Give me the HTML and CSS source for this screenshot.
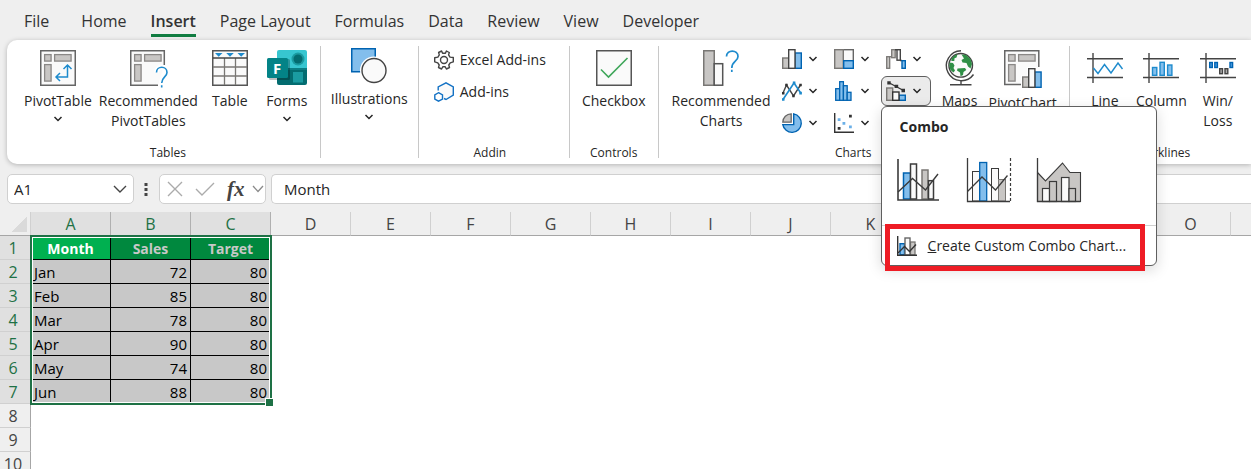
FILE: index.html
```html
<!DOCTYPE html>
<html lang="en">
  <head>
    <meta charset="UTF-8" />
    <title>Insert - Combo Chart</title>
    <meta name="viewport" content="width=device-width, initial-scale=1" />
    <link rel="stylesheet" href="styles.css">
  </head>
  <body>
    <svg class="defs" aria-hidden="true">
      <symbol id="chevron" viewBox="0 0 10 6">
        <path d="M1.5 1 L5 4.5 L8.5 1" fill="none" stroke="#262626" stroke-width="1.5" />
      </symbol>
      <symbol id="pivot-parts" viewBox="0 0 36 36">
        <g fill="#c8c6c4" stroke="#8a8886" stroke-width="1.3">
          <rect x="4.6" y="4.6" width="6.5" height="6.5" />
          <rect x="14.6" y="4.6" width="16.5" height="6.5" />
          <rect x="4.6" y="14.6" width="6.5" height="16.5" />
        </g>
      </symbol>
    </svg>

    <nav class="tabs">
      <a class="tab file" href="#">File</a>
      <a class="tab" href="#">Home</a>
      <a class="tab active" href="#">Insert</a>
      <a class="tab" href="#">Page Layout</a>
      <a class="tab" href="#">Formulas</a>
      <a class="tab" href="#">Data</a>
      <a class="tab" href="#">Review</a>
      <a class="tab" href="#">View</a>
      <a class="tab" href="#">Developer</a>
    </nav>

    <div class="ribbon">
      <section class="group tables">
        <div class="group-body">
          <button class="big">
            <svg width="36" height="36" viewBox="0 0 36 36">
              <rect x=".75" y=".75" width="34.5" height="34.5" fill="#fafafa" stroke="#666" stroke-width="1.5" />
              <use href="#pivot-parts" width="36" height="36" />
              <path d="M17 27 H27.5 V15.5 M23.5 19 L27.5 15 L31.5 19 M20 23 L16 27 L20 31" fill="none" stroke="#1e8bcd" stroke-width="1.5" />
            </svg>
            <span>PivotTable</span>
            <svg class="chevron"><use href="#chevron" /></svg>
          </button>
          <button class="big">
            <svg width="36" height="36" viewBox="0 0 36 36">
              <path d="M34.3 15 V.75 H.75 V35.3 H28" fill="#fafafa" stroke="#666" stroke-width="1.5" />
              <use href="#pivot-parts" width="36" height="36" />
              <path d="M26.5 22.5 C26.5 15.5 37 15.5 37 22.5 C37 27 31.7 27 31.7 33 M31.7 35.2 V37.6" fill="none" stroke="#fff" stroke-width="5" />
              <path d="M26.5 22.5 C26.5 15.5 37 15.5 37 22.5 C37 27 31.7 27 31.7 33 M31.7 35.2 V37.6" fill="none" stroke="#1e8bcd" stroke-width="1.6" />
            </svg>
            <span>Recommended<br>PivotTables</span>
          </button>
          <button class="big">
            <svg width="36" height="36" viewBox="0 0 36 36">
              <rect x=".75" y=".75" width="34.5" height="34.5" fill="#fafafa" stroke="#555" stroke-width="1.5" />
              <path d="M1 17 H35 M1 26 H35 M12.5 8 V35 M23.5 8 V35" stroke="#797774" stroke-width="1.3" />
              <path d="M1 8 H35" stroke="#444" stroke-width="1.3" />
              <path d="M3 3 H10.5 L6.7 6.8 Z M14.2 3 H21.8 L18 6.8 Z M25.5 3 H33 L29.2 6.8 Z" fill="#1e8bcd" />
            </svg>
            <span>Table</span>
          </button>
          <button class="big">
            <svg width="40" height="36" viewBox="0 0 40 36">
              <path d="M12 0 H38 Q40 0 40 2 V18 H10 V2 Q10 0 12 0 Z" fill="#37c6d0" />
              <path d="M10 18 H40 V33 Q40 35 38 35 H12 Q10 35 10 33 Z" fill="#036c70" />
              <path d="M20 18 H40 V20 H20 Z" fill="#0b7f84" />
              <circle cx="31" cy="9" r="6.5" fill="#1a9ba1" />
              <circle cx="31" cy="9" r="4.5" fill="#036c70" />
              <rect x="26" y="22" width="10" height="10.5" fill="#1a9ba1" />
              <rect x="2" y="9" width="21" height="21" rx="1.5" fill="#000" opacity=".25" />
              <rect x="0" y="8" width="21" height="20" rx="1.5" fill="#038387" />
              <text class="forms-letter" x="10" y="23.5" text-anchor="middle">F</text>
            </svg>
            <span>Forms</span>
            <svg class="chevron"><use href="#chevron" /></svg>
          </button>
        </div>
        <div class="group-label">Tables</div>
      </section>

      <section class="group illustrations">
        <div class="group-body">
          <button class="big">
            <svg width="36" height="36" viewBox="0 0 36 36">
              <rect x=".75" y=".75" width="23.5" height="23" fill="#83beec" stroke="#0063b1" stroke-width="1.5" />
              <circle cx="23" cy="22.5" r="14" fill="#fff" />
              <circle cx="23" cy="22.5" r="12" fill="#fafafa" stroke="#444" stroke-width="1.4" />
            </svg>
            <span>Illustrations</span>
            <svg class="chevron"><use href="#chevron" /></svg>
          </button>
        </div>
      </section>

      <section class="group addin">
        <div class="group-body">
          <button class="row-button">
            <svg width="20" height="20" viewBox="0 0 20 20" fill="none" stroke="#444" stroke-width="1.4">
              <path d="M7.6 1 L8.6 3.3 H11.4 L12.4 1 L15.3 2.5 L14.6 4.9 L16 7.1 L19.3 7.5 V11.8 L16.2 12.8 L14.8 15 L15.5 17.5 L12.4 19 L11.2 16.7 H8.8 L7.6 19 L4.5 17.5 L5.2 15 L3.8 12.8 L.7 11.8 V7.7 L3.9 7.1 L5.3 4.9 L4.6 2.5 Z" stroke-linejoin="round" />
              <circle cx="10" cy="10" r="3.5" />
            </svg>
            Excel Add-ins
          </button>
          <button class="row-button">
            <svg width="20" height="20" viewBox="0 0 20 20" fill="none" stroke="#1271c4" stroke-width="1.4">
              <path d="M4.2 8.5 V5 L12 .9 L19.3 4.8 V13 L12 17.5 L10 16.5" fill="#fafafa" />
              <path d="M4.5 10.7 L8.5 12.8 V17 L4.5 19.2 L.8 17 V12.8 Z" fill="#fff" />
            </svg>
            Add-ins
          </button>
        </div>
        <div class="group-label">Addin</div>
      </section>

      <section class="group controls">
        <div class="group-body">
          <button class="big">
            <svg width="36" height="36" viewBox="0 0 36 36">
              <rect x=".75" y=".75" width="34.5" height="34.5" fill="#fafafa" stroke="#555" stroke-width="1.5" />
              <path d="M5 19.5 L12.5 27 L31.5 8" fill="none" stroke="#3fa65a" stroke-width="1.6" />
            </svg>
            <span>Checkbox</span>
          </button>
        </div>
        <div class="group-label">Controls</div>
      </section>

      <section class="group charts">
        <div class="group-body">
          <button class="big">
            <svg width="36" height="36" viewBox="0 0 36 36">
              <rect x=".75" y=".75" width="10.5" height="34.5" fill="#c8c6c4" stroke="#797774" stroke-width="1.5" />
              <rect x="11.2" y="13.7" width="8.5" height="21.5" fill="#fafafa" stroke="#555" stroke-width="1.5" />
              <path d="M23.5 6.5 C23.5 -.8 35 -.8 35 6.5 C35 11.5 28.8 11 28.8 18 M28.8 19.7 V22" fill="none" stroke="#1e8bcd" stroke-width="1.7" />
            </svg>
            <span>Recommended<br>Charts</span>
          </button>

          <div class="chart-types">
            <button class="small" aria-label="Column or Bar Chart">
              <svg width="20" height="20" viewBox="0 0 20 20">
                <rect x=".7" y="9" width="6" height="10.3" fill="#c8c6c4" stroke="#797774" stroke-width="1.4" />
                <rect x="13" y="4" width="6.3" height="15.3" fill="#83beec" stroke="#0063b1" stroke-width="1.4" />
                <rect x="6.7" y=".7" width="6.3" height="18.6" fill="#fafafa" stroke="#444" stroke-width="1.4" />
              </svg>
              <svg class="chevron"><use href="#chevron" /></svg>
            </button>
            <button class="small" aria-label="Hierarchy Chart">
              <svg width="20" height="20" viewBox="0 0 20 20">
                <rect x="9.3" y=".7" width="10" height="11" fill="#fafafa" stroke="#666" stroke-width="1.4" />
                <rect x=".7" y=".7" width="8.6" height="18.6" fill="#c8c6c4" stroke="#797774" stroke-width="1.4" />
                <rect x="9.7" y="11.7" width="9.6" height="7.6" fill="#83beec" stroke="#0063b1" stroke-width="1.4" />
              </svg>
              <svg class="chevron"><use href="#chevron" /></svg>
            </button>
            <button class="small" aria-label="Waterfall Chart">
              <svg width="20" height="20" viewBox="0 0 20 20">
                <rect x=".7" y="7.7" width="3" height="11.6" fill="#c8c6c4" stroke="#797774" stroke-width="1.3" />
                <rect x="5.7" y=".7" width="3.5" height="8" fill="#c8c6c4" stroke="#797774" stroke-width="1.3" />
                <path d="M3.7 7.7 H5.7" stroke="#797774" stroke-width="1.3" />
                <rect x="11" y=".7" width="3.3" height="10.5" fill="#fafafa" stroke="#444" stroke-width="1.4" />
                <path d="M9 .7 H11 M14 11.5 H16" stroke="#444" stroke-width="1.4" />
                <rect x="16" y="11.7" width="3.3" height="7.6" fill="#83beec" stroke="#0063b1" stroke-width="1.4" />
              </svg>
              <svg class="chevron"><use href="#chevron" /></svg>
            </button>
            <button class="small" aria-label="Line or Area Chart">
              <svg width="20" height="20" viewBox="0 0 20 20">
                <path d="M1 12 L4.5 4 L11.5 15 L18.5 4" fill="none" stroke="#444" stroke-width="1.4" />
                <path d="M0 11 h2.5 v2.5 h-2.5 Z M3.2 2.7 h2.5 v2.5 h-2.5 Z M10.2 13.7 h2.5 v2.5 h-2.5 Z M17.3 2.7 h2.5 v2.5 h-2.5 Z" fill="#333" />
                <path d="M1 18.5 L12 2 L18.7 12" fill="none" stroke="#1e8bcd" stroke-width="1.6" />
                <path d="M0 17.3 h2.5 v2.5 h-2.5 Z M10.8 .5 h2.6 v2.6 h-2.6 Z M17.3 10.8 h2.6 v2.6 h-2.6 Z" fill="#1e8bcd" />
              </svg>
              <svg class="chevron"><use href="#chevron" /></svg>
            </button>
            <button class="small" aria-label="Statistic Chart">
              <svg width="20" height="20" viewBox="0 0 20 20" fill="#83beec" stroke="#0063b1" stroke-width="1.3">
                <rect x="1.7" y="7.7" width="4" height="11.6" />
                <rect x="5.7" y=".7" width="3.7" height="18.6" />
                <rect x="9.4" y="4.7" width="3.8" height="14.6" />
                <rect x="13.2" y="11.3" width="3.8" height="8" />
              </svg>
              <svg class="chevron"><use href="#chevron" /></svg>
            </button>
            <div class="combo">
              <button class="small pressed" aria-label="Combo Chart">
                <svg width="20" height="20" viewBox="0 0 20 20">
                  <rect x=".7" y="7" width="6" height="12.3" fill="#c8c6c4" stroke="#797774" stroke-width="1.4" />
                  <rect x="13" y="14.2" width="6.3" height="5.1" fill="#83beec" stroke="#0063b1" stroke-width="1.4" />
                  <rect x="6.7" y="11" width="6.3" height="8.3" fill="#fafafa" stroke="#333" stroke-width="1.4" />
                  <path d="M3 1.8 L10 5.5 L17.5 9.5" fill="none" stroke="#333" stroke-width="1.2" />
                  <path d="M1.3 .2 h3.4 v3.4 h-3.4 Z M8.6 3.7 h3.6 v3.4 h-3.6 Z M15.5 7.7 h3.5 v3.5 h-3.5 Z" fill="#333" />
                </svg>
                <svg class="chevron"><use href="#chevron" /></svg>
              </button>

              <div class="menu">
                <div class="menu-title">Combo</div>
                <div class="gallery">
                  <button class="thumb" aria-label="Clustered Column - Line">
                    <svg width="44" height="46" viewBox="0 0 44 46">
                      <rect x="6.5" y="16" width="7" height="26" fill="#83beec" stroke="#0063b1" stroke-width="1.5" />
                      <rect x="13.5" y="7" width="6" height="35" fill="#fafafa" stroke="#3b3b3b" stroke-width="1.5" />
                      <rect x="25" y="13" width="6" height="29" fill="#c8c6c4" stroke="#797774" stroke-width="1.5" />
                      <rect x="31.5" y="23.7" width="5" height="18.3" fill="#fafafa" stroke="#3b3b3b" stroke-width="1.5" />
                      <path d="M1 35 L15.5 21.5 L28.5 33 L41 17" fill="none" stroke="#3b3b3b" stroke-width="1.4" />
                      <path d="M1 2 V43 H42" fill="none" stroke="#3b3b3b" stroke-width="1.6" />
                    </svg>
                  </button>
                  <button class="thumb" aria-label="Clustered Column - Line on Secondary Axis">
                    <svg width="44" height="46" viewBox="0 0 44 46">
                      <rect x="5.5" y="14.5" width="7" height="29.5" fill="#fafafa" stroke="#3b3b3b" />
                      <rect x="12.7" y="5.5" width="7" height="38.5" fill="#83beec" stroke="#0063b1" stroke-width="1.3" />
                      <rect x="24.5" y="11.5" width="7" height="32.5" fill="#fafafa" stroke="#3b3b3b" />
                      <rect x="31.5" y="22.5" width="7" height="21.5" fill="#c8c6c4" stroke="#797774" />
                      <path d="M.5 34.5 L15 20 L28.5 33 L40.5 18.5" fill="none" stroke="#3b3b3b" stroke-width="1.3" />
                      <path d="M.5 1 V44.5 H43" fill="none" stroke="#3b3b3b" stroke-width="1.3" />
                      <path d="M43.5 1 V44" stroke="#3b3b3b" stroke-width="1.2" stroke-dasharray="3 2" />
                    </svg>
                  </button>
                  <button class="thumb" aria-label="Stacked Area - Clustered Column">
                    <svg width="44" height="46" viewBox="0 0 44 46">
                      <path d="M.5 15.5 L8.5 24 L25.5 6 L33 15.5 H43.5 V44.5 H.5 Z" fill="#c8c6c4" stroke="#3b3b3b" stroke-width="1.1" />
                      <g stroke="#3b3b3b" stroke-width="1.2">
                        <rect x="5.5" y="31.5" width="7" height="13" fill="#fafafa" />
                        <rect x="12.5" y="24.5" width="7" height="20" fill="#c8c6c4" />
                        <rect x="24.5" y="20.5" width="7.5" height="24" fill="#fafafa" />
                        <rect x="32" y="31.5" width="6.5" height="13" fill="#c8c6c4" />
                      </g>
                      <path d="M.5 1 V44.5 H43.5" fill="none" stroke="#3b3b3b" stroke-width="1.3" />
                    </svg>
                  </button>
                </div>
                <button class="menu-item">
                  <svg width="20" height="20" viewBox="0 0 20 20">
                    <rect x="3" y="7.7" width="4.5" height="11" fill="#83beec" stroke="#0063b1" stroke-width="1.4" />
                    <rect x="13.5" y="6" width="4.5" height="13" fill="#c8c6c4" stroke="#797774" stroke-width="1.3" />
                    <rect x="8" y="2" width="5" height="17" fill="#fafafa" stroke="#666" stroke-width="1.4" />
                    <path d="M1 17 L7.5 10.5 L12.5 15.5 L19 8.5" fill="none" stroke="#333" stroke-width="1.4" />
                    <path d="M.7 0 V19.3 H20" fill="none" stroke="#333" stroke-width="1.4" />
                  </svg>
                  <span><u>C</u>reate Custom Combo Chart...</span>
                </button>
              </div>
            </div>
            <button class="small" aria-label="Pie or Doughnut Chart">
              <svg width="20" height="20" viewBox="0 0 20 20">
                <path d="M11.7 .9 A9.3 9.3 0 1 1 .8 11.6 H11.7 Z" fill="#83beec" stroke="#0063b1" stroke-width="1.4" />
                <path d="M9.2 .8 V9.2 H.8 A8.6 8.6 0 0 1 9.2 .8 Z" fill="#c8c6c4" stroke="#666" stroke-width="1.3" />
              </svg>
              <svg class="chevron"><use href="#chevron" /></svg>
            </button>
            <button class="small" aria-label="Scatter Chart">
              <svg width="20" height="20" viewBox="0 0 20 20">
                <path d="M.7 0 V19.3 H20" fill="none" stroke="#333" stroke-width="1.4" />
                <path d="M15 1.7 h2.8 v2.8 h-2.8 Z M3.7 14 h2.8 v2.8 h-2.8 Z" fill="#333" />
                <path d="M3.7 5.2 h2.8 v2.8 h-2.8 Z M8.5 9 h2.8 v2.8 h-2.8 Z M15 12.5 h2.8 v2.8 h-2.8 Z" fill="#6bb0e8" />
              </svg>
              <svg class="chevron"><use href="#chevron" /></svg>
            </button>
          </div>

          <button class="big maps">
            <svg width="36" height="36" viewBox="0 0 36 36" fill="none" stroke="#444" stroke-width="1.4">
              <circle cx="18.7" cy="15.3" r="11.8" fill="#fafafa" />
              <g fill="#2f8f46" stroke="none">
                <path d="M19.5 4.5 L24 5 L28.5 9 L30 14 L28.5 18.5 L26 16.5 L24.5 13 L20.5 12.5 L19.5 10 L22 8.5 Z" />
                <path d="M7.5 12.5 L11 13 L12.5 15.5 L11.5 18 L13 20.5 L11.5 22.5 L8.5 20 L7.3 16 Z" />
                <path d="M9.5 8.5 L12.5 5.5 L15.5 4.3 L14.5 7.5 L12.5 8.3 L12.3 11 L9.3 11 Z" />
                <path d="M15.5 18.5 L23 18 L24.3 20 L21.5 22 L21 25 L18.5 26.3 L18 22.5 L15 20.5 Z" />
              </g>
              <path d="M19 .7 A15 15 0 1 0 31.5 24.5" />
              <path d="M19 30.5 V34.5 M8 34.7 H29.5" />
            </svg>
            <span>Maps</span>
          </button>
          <button class="big">
            <svg width="38" height="38" viewBox="0 0 38 38">
              <path d="M34.8 17 V.75 H.75 V34.5 H17" fill="#fafafa" stroke="#666" stroke-width="1.5" />
              <use href="#pivot-parts" width="36" height="36" />
              <path d="M17 38 V25.5 H23 V17 H32.5 V20.5 H38 V38 Z" fill="#fff" />
              <rect x="18.7" y="27" width="6" height="10.3" fill="#c8c6c4" stroke="#797774" stroke-width="1.4" />
              <rect x="30.8" y="22" width="6.3" height="15.3" fill="#83beec" stroke="#0063b1" stroke-width="1.4" />
              <rect x="24.7" y="18.7" width="6.2" height="18.6" fill="#fafafa" stroke="#444" stroke-width="1.4" />
            </svg>
            <span>PivotChart</span>
          </button>
        </div>
        <div class="group-label">Charts</div>
      </section>

      <section class="group sparklines">
        <div class="group-body">
          <button class="big">
            <svg width="36" height="36" viewBox="0 0 36 36">
              <path d="M0 8.7 H36 M0 27.5 H36 M6 3 V33" stroke="#444" stroke-width="1.4" />
              <path d="M6.5 18 L11 23.5 L17.5 14.5 L24 23 L31 13 L35.5 19" fill="none" stroke="#1e8bcd" stroke-width="1.4" />
            </svg>
            <span>Line</span>
          </button>
          <button class="big">
            <svg width="36" height="36" viewBox="0 0 36 36">
              <path d="M0 8.7 H36 M0 27.5 H36 M6 3 V33" stroke="#444" stroke-width="1.4" />
              <g fill="#83beec" stroke="#1e8bcd" stroke-width="1.4">
                <rect x="9.5" y="17.5" width="4.3" height="7.8" />
                <rect x="17" y="12.3" width="4.3" height="13" />
                <rect x="24.6" y="15" width="4.3" height="10.3" />
              </g>
            </svg>
            <span>Column</span>
          </button>
          <button class="big">
            <svg width="36" height="36" viewBox="0 0 36 36">
              <path d="M0 8.7 H36 M0 27.5 H36 M6 3 V33" stroke="#444" stroke-width="1.4" />
              <g fill="#4a9be0" stroke="#0063b1" stroke-width="1.4">
                <rect x="9.7" y="12.5" width="2.6" height="5" />
                <rect x="14.8" y="12.5" width="2.6" height="5" />
                <rect x="30" y="12.5" width="2.6" height="5" />
              </g>
              <g fill="#aaa" stroke="#444" stroke-width="1.4">
                <rect x="19.7" y="18.7" width="2.8" height="5" />
                <rect x="25" y="18.7" width="2.8" height="5" />
              </g>
            </svg>
            <span>Win/<br>Loss</span>
          </button>
        </div>
        <div class="group-label">Sparklines</div>
      </section>
    </div>

    <div class="formula-bar">
      <div class="box name-box">
        <input type="text" aria-label="Name Box" value="A1">
        <button aria-label="Open Name Box">
          <svg width="14" height="8" viewBox="0 0 14 8"><path d="M1 1 L7 7 L13 1" fill="none" stroke="#444" stroke-width="1.4" /></svg>
        </button>
      </div>
      <svg class="dots" width="4" height="14" viewBox="0 0 4 14" fill="#444">
        <rect x=".5" y="1" width="3" height="3" /><rect x=".5" y="6" width="3" height="3" /><rect x=".5" y="11" width="3" height="3" />
      </svg>
      <div class="box fx-box">
        <button aria-label="Cancel">
          <svg width="16" height="16" viewBox="0 0 16 16"><path d="M1 1 L15 15 M15 1 L1 15" stroke="#ababab" stroke-width="1.4" /></svg>
        </button>
        <button aria-label="Enter">
          <svg width="20" height="16" viewBox="0 0 20 16"><path d="M1 8 L7 14 L19 2" fill="none" stroke="#ababab" stroke-width="1.4" /></svg>
        </button>
        <button class="fx" aria-label="Insert Function">fx</button>
        <button aria-label="More Functions">
          <svg width="12" height="8" viewBox="0 0 12 8"><path d="M1 1 L6 6.5 L11 1" fill="none" stroke="#8a8a8a" stroke-width="1.3" /></svg>
        </button>
      </div>
      <input class="box formula" type="text" aria-label="Formula Bar" value="Month">
    </div>

    <div class="sheet">
      <table>
        <thead>
          <tr>
            <th class="corner"></th>
            <th class="selected">A</th>
            <th class="selected">B</th>
            <th class="selected">C</th>
            <th>D</th>
            <th>E</th>
            <th>F</th>
            <th>G</th>
            <th>H</th>
            <th>I</th>
            <th>J</th>
            <th>K</th>
            <th>L</th>
            <th>M</th>
            <th>N</th>
            <th>O</th>
            <th></th>
          </tr>
        </thead>
        <tbody>
          <tr class="titles"><th class="selected">1</th><td class="current">Month</td><td>Sales</td><td>Target</td></tr>
          <tr class="data"><th class="selected">2</th><td>Jan</td><td>72</td><td>80</td></tr>
          <tr class="data"><th class="selected">3</th><td>Feb</td><td>85</td><td>80</td></tr>
          <tr class="data"><th class="selected">4</th><td>Mar</td><td>78</td><td>80</td></tr>
          <tr class="data"><th class="selected">5</th><td>Apr</td><td>90</td><td>80</td></tr>
          <tr class="data"><th class="selected">6</th><td>May</td><td>74</td><td>80</td></tr>
          <tr class="data"><th class="selected">7</th><td>Jun</td><td>88</td><td>80</td></tr>
          <tr><th>8</th></tr>
          <tr><th>9</th></tr>
          <tr><th>10</th></tr>
        </tbody>
      </table>
      <div class="selection"></div>
    </div>
  </body>
</html>
```
FILE: styles.css
```css
* {
  box-sizing: border-box;
}

body {
  font-family: "Open Sans", "Noto Sans", sans-serif;
  font-size: 14px;
  color: #262626;
  background: #efefef;
  margin: 0;
  height: 100vh;
  overflow: hidden;
  display: flex;
  flex-direction: column;
}

button,
input {
  font: inherit;
  color: inherit;
  background: none;
  border: 0;
  padding: 0;
  margin: 0;
}

svg {
  display: block;
  flex: none;
  overflow: visible;
}

.defs {
  position: absolute;
  width: 0;
  height: 0;
}

.chevron {
  width: 10px;
  height: 6px;
}

/* tabs */
.tabs {
  display: flex;
  gap: 24px;
  padding: 10px 24px 3px;
  font-size: 16px;
  line-height: 22px;
}

.tab {
  color: #333;
  text-decoration: none;
  white-space: nowrap;
  padding-bottom: 2px;
  border-bottom: 3px solid transparent;
}

.tab.file {
  margin-right: 8px;
}

.tab.active {
  font-weight: 600;
  border-color: #107c41;
}

/* ribbon */
.ribbon {
  display: flex;
  margin-left: 7px;
  padding: 6px 0;
  background: #fff;
  border-radius: 10px 0 0 10px;
  box-shadow: 0 1px 5px rgba(0, 0, 0, 0.25);
}

.group {
  flex: none;
  display: flex;
  flex-direction: column;
  padding-top: 4px;
  border-right: 1px solid #c8c8c8;
}

.group-body {
  display: flex;
  justify-content: center;
  gap: 6px;
  height: 98px;
}

.group-label {
  font-size: 12px;
  line-height: 10px;
  text-align: center;
}

.big {
  display: flex;
  flex-direction: column;
  align-items: center;
  gap: 5px;
  min-width: 50px;
  line-height: 20px;
  white-space: nowrap;
}

.forms-letter {
  font-size: 15px;
  font-weight: 700;
  fill: #fff;
}

.tables {
  padding-left: 17px;
  padding-right: 8px;
}

.tables .group-body {
  gap: 7px;
}

.illustrations {
  padding: 2px 10px 0;
}

.addin {
  padding-left: 15px;
  padding-right: 23px;
}

.addin .group-body {
  flex-direction: column;
  justify-content: flex-start;
  gap: 12px;
}

.row-button {
  display: flex;
  align-items: center;
  gap: 6px;
  line-height: 20px;
  white-space: nowrap;
}

.controls {
  padding-left: 12px;
  padding-right: 12px;
}

.charts {
  padding-left: 13px;
  padding-right: 12px;
}

.charts .group-label {
  padding-right: 22px;
}

.chart-types {
  display: grid;
  grid-template-columns: repeat(3, 50px);
  grid-auto-rows: 30px;
  gap: 2px;
  margin-top: -6px;
}

.small {
  display: flex;
  align-items: center;
  justify-content: center;
  gap: 6px;
  width: 50px;
  height: 30px;
  padding-right: 4px;
}

.pressed {
  background: #ebebeb;
  border: 1px solid #5f5f5f;
  border-radius: 6px;
}

.maps {
  min-width: 46px;
}

.sparklines {
  flex: 1 0 auto;
  padding-left: 2px;
  border-right: 0;
}

/* combo menu */
.combo {
  position: relative;
}

.menu {
  position: absolute;
  top: 30px;
  left: 0;
  z-index: 2;
  width: 276px;
  padding: 10px 0 0;
  background: #fff;
  border: 1px solid #5f5f5f;
  border-radius: 6px;
  box-shadow: 0 4px 14px rgba(0, 0, 0, 0.15);
}

.menu-title {
  padding-left: 18px;
  font-weight: 700;
  line-height: 20px;
}

.gallery {
  display: flex;
  gap: 26px;
  padding: 20px 15px 22px;
}

.menu-item {
  position: relative;
  display: flex;
  align-items: center;
  gap: 11px;
  width: 100%;
  height: 40px;
  padding-left: 15px;
  border-top: 1px solid #d0d0d0;
  white-space: nowrap;
}

.menu-item::after {
  content: "";
  position: absolute;
  top: -2px;
  right: 11px;
  bottom: -6px;
  left: 3px;
  border: 5px solid #ee1c25;
}

/* formula bar */
.formula-bar {
  display: flex;
  align-items: center;
  padding: 10px 0 8px 7px;
}

.box {
  display: flex;
  align-items: center;
  height: 30px;
  background: #fff;
  border: 1px solid #d0d0d0;
  border-radius: 5px;
  font-size: 15px;
}

.name-box {
  width: 127px;
  padding: 0 6px;
}

.name-box input {
  flex: 1;
  min-width: 0;
}

.dots {
  margin: 0 11px 0 10px;
}

.fx-box {
  gap: 12px;
  width: 107px;
  padding-left: 7px;
}

.fx {
  margin-right: -5px;
  font-family: "Liberation Serif", serif;
  font-size: 21px;
  font-style: italic;
  font-weight: 700;
  line-height: 20px;
  color: #444;
}

.formula {
  flex: 1;
  margin-left: 5px;
  padding-left: 12px;
  border-right: 0;
  border-radius: 5px 0 0 5px;
}

/* sheet */
.sheet {
  position: relative;
  flex: 1;
  overflow: hidden;
  background: #fff;
}

table {
  table-layout: fixed;
  width: 1311px;
  border-spacing: 0;
}

th,
td {
  width: 80px;
  height: 24px;
  padding: 0;
  line-height: 20px;
}

th {
  font-size: 16px;
  font-weight: 400;
  color: #444;
  background: #efefef;
}

thead th {
  border-right: 1px solid #d0d0d0;
  border-bottom: 1px solid #a6a6a6;
}

tbody th,
.corner {
  width: 31px;
}

tbody th {
  border-right: 1px solid #a6a6a6;
  border-bottom: 1px solid #d0d0d0;
  padding-right: 4px;
}

th.selected {
  color: #1e7145;
  background: #e0e0e0;
}

thead th.selected {
  border-right-color: #b0b0b0;
}

.corner {
  background: linear-gradient(135deg, #efefef 50%, #dadada 50%) 12px 5px / 15px 15px no-repeat #efefef;
}

td {
  border-right: 1px solid #000;
  border-bottom: 1px solid #000;
}

.titles td {
  padding-top: 2px;
  text-align: center;
  font-weight: 700;
  color: #c8c8c8;
  background: #00883e;
}

.titles .current {
  color: #fff;
  background: #00b050;
}

.data td {
  font-size: 15px;
  color: #000;
  background: #c8c8c8;
  text-align: right;
  padding-right: 3px;
}

.data td:nth-child(2) {
  text-align: left;
  padding-left: 3px;
}

.selection {
  position: absolute;
  top: 23px;
  left: 30px;
  width: 242px;
  height: 170px;
  border: 2px solid #1e7145;
  box-shadow: inset 0 0 0 1px #fff;
}

.selection::after {
  content: "";
  position: absolute;
  right: -4px;
  bottom: -4px;
  width: 7px;
  height: 7px;
  background: #1e7145;
  border: 1px solid #fff;
}
```
